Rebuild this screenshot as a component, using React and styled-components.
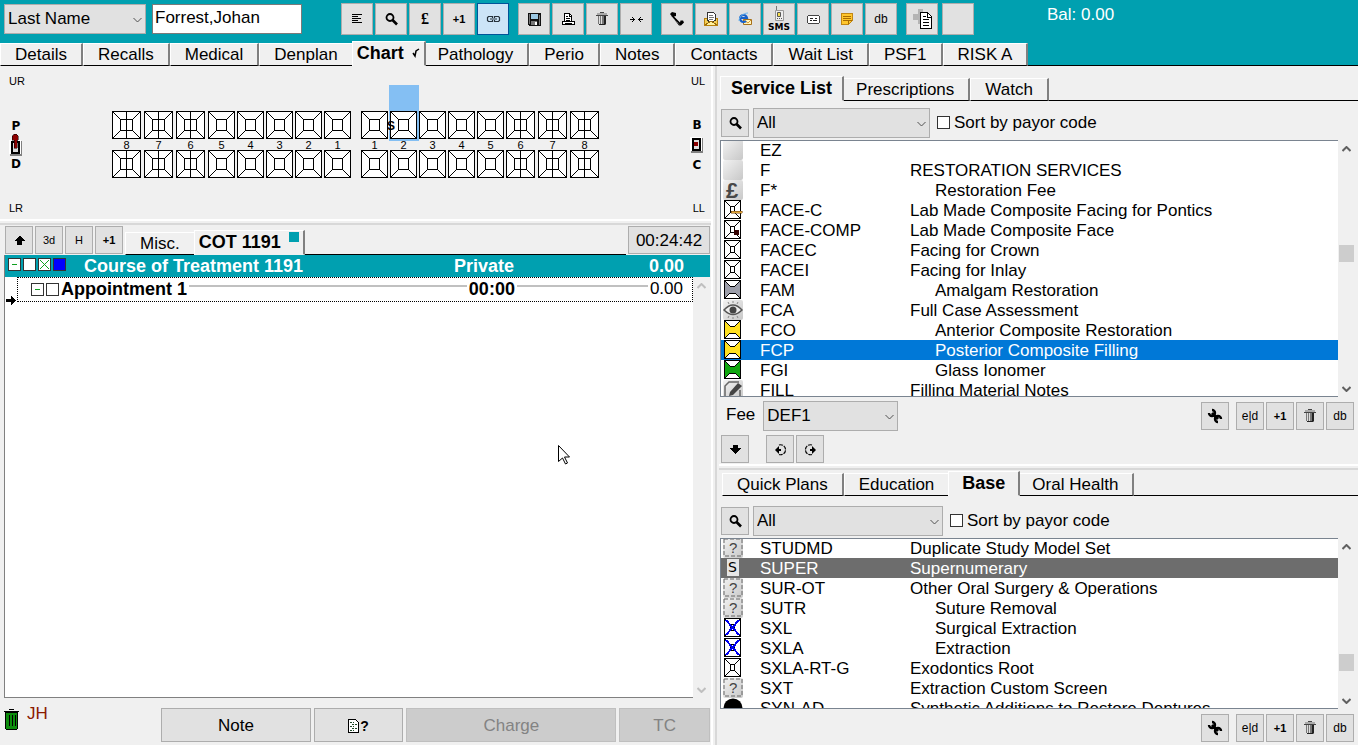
import { useState } from "react";
import styled, { createGlobalStyle, css } from "styled-components";

const GlobalStyle = createGlobalStyle`
  * {
    box-sizing: border-box;
  }

  body {
    margin: 0;
    background: #f0f0f0;
    color: #000;
    font-family: "Liberation Sans", Arial, sans-serif;
    font-size: 17px;
    line-height: 20px;
  }

  button,
  input,
  select {
    font: inherit;
    color: inherit;
  }
`;

const Page = styled.div`
  display: flex;
  flex-direction: column;
  height: 100vh;
  overflow: hidden;
`;

const Header = styled.header`
  background: #00a0b0;
`;

const Toolbar = styled.div`
  display: flex;
  height: 40px;
  padding: 3px 4px 0;
`;

const ToolGroup = styled.div`
  display: flex;
  gap: ${(props) => props.$gap || 2}px;
  margin-right: ${(props) => (props.$last ? 73 : 9)}px;
`;

const Balance = styled.div`
  padding-top: 2px;
  color: #fff;
`;

const Button = styled.button`
  display: flex;
  flex: none;
  align-items: center;
  justify-content: center;
  width: ${(props) => props.$size || 28}px;
  height: ${(props) => props.$size || 28}px;
  padding: 0;
  border: 1px solid #adadad;
  background: #e1e1e1;
  font-size: 12px;

  ${(props) =>
    props.$active &&
    css`
      border-color: #005499;
      background: #cce4f7;
    `}
`;

const Glyph = styled.span`
  font-family: ${(props) =>
    props.$serif ? '"Liberation Serif", serif' : '"Liberation Sans", sans-serif'};
  font-size: ${(props) => props.$size || 12}px;
  font-weight: ${(props) => (props.$bold ? "bold" : "normal")};
  line-height: 16px;
`;

const Svg = styled.svg`
  display: block;
  flex: none;
  shape-rendering: ${(props) => (props.$smooth ? "auto" : "crispEdges")};
`;

const SelectBox = styled.div`
  position: relative;
  flex: none;
  width: ${(props) => props.$width}px;
  height: 30px;

  select {
    width: 100%;
    height: 100%;
    padding: 0 20px 0 3px;
    border: 1px solid #adadad;
    border-radius: 0;
    background: #e1e1e1;
    appearance: none;
  }

  svg {
    position: absolute;
    right: 4px;
    top: 13px;
    pointer-events: none;
  }
`;

const SearchField = styled.div`
  padding-top: 1px;
`;

const PatientName = styled.input`
  width: 150px;
  height: 30px;
  margin: 1px 39px 0 6px;
  padding: 0 2px 2px;
  border: 1px solid #7a7a7a;
  background: #fff;
`;

const TabStrip = styled.div`
  display: flex;
  flex: ${(props) => (props.$grow ? 1 : "none")};
  align-items: flex-end;
  height: ${(props) => props.$height || 25}px;
  margin-top: ${(props) => props.$top || 0}px;
  padding-left: ${(props) => props.$inset || 0}px;
`;

const TabRest = styled.div`
  flex: 1;
  align-self: flex-end;
  border-bottom: 1px solid #000;
`;

const Tab = styled.button`
  display: flex;
  align-items: center;
  flex: none;
  gap: 8px;
  height: 23px;
  padding: 0 14px;
  border: 0;
  border-left: 1px solid #fff;
  border-top: 1px solid #fff;
  border-right: 2px solid #808080;
  border-bottom: 1px solid #000;
  background: #f0f0f0;
  white-space: nowrap;

  ${(props) =>
    props.$active &&
    css`
      z-index: 1;
      height: 25px;
      margin: 0 -3px 0 -2px;
      padding: 0 ${props.$pad}px 2px;
      border-bottom-color: #f0f0f0;
      font-size: 18px;
      font-weight: bold;
    `}

  &:first-child {
    margin-left: 0;
  }
`;

const Workspace = styled.main`
  display: grid;
  flex: 1;
  grid-template-columns: minmax(0, 711fr) 8px minmax(0, 639fr);
  min-height: 0;
`;

const Column = styled.section`
  display: flex;
  flex-direction: column;
  min-height: 0;
`;

const VSplit = styled.div`
  background: linear-gradient(to right, #fff 2px, #f0f0f0 2px 4px, #d8d8d8 4px 6px, #f0f0f0 6px);
`;

const HSplit = styled.div`
  flex: none;
  height: 7px;
  background: linear-gradient(to bottom, #fff 2px, #f0f0f0 2px 4px, #d8d8d8 4px 6px, #f0f0f0 6px);
`;

const Mouth = styled.div`
  display: grid;
  flex: none;
  grid-template-columns: 103px 1fr 20px;
  height: 153px;
  padding: 7px 6px 3px 9px;
`;

const Side = styled.div`
  display: flex;
  flex-direction: column;
  justify-content: space-between;
  align-items: ${(props) => (props.$right ? "flex-end" : "flex-start")};
  font-size: 11px;
  line-height: 16px;
`;

const Switcher = styled.div`
  display: flex;
  flex-direction: column;
  align-items: center;
  gap: ${(props) => props.$gap}px;
  margin-right: 1px;
  font-family: "DejaVu Sans", sans-serif;
  font-size: 12px;
  font-weight: bold;
  line-height: 14px;
`;

const Arches = styled.div`
  display: flex;
  gap: 10px;
  padding-top: 38px;
`;

const Quadrants = styled.div`
  display: flex;
  gap: 2px;
`;

const ToothColumn = styled.div`
  position: relative;
  display: flex;
  flex-direction: column;
  height: 67px;
  font-size: 11px;
  line-height: 13px;
  text-align: center;
  margin-left: ${(props) => (props.$shifted ? 1 : 0)}px;
  margin-right: ${(props) => (props.$spaced ? 1 : 0)}px;

  ${(props) =>
    props.$selected &&
    css`
      &::before {
        content: "";
        position: absolute;
        left: -1px;
        top: -26px;
        width: 30px;
        height: 56px;
        background: #84bff3;
      }
    `}

  svg {
    position: relative;
  }

  svg + svg {
    margin-top: 11px;
  }
`;

const ToothNumber = styled.span`
  position: relative;
  height: 11px;
`;

const ToothMark = styled.span`
  position: absolute;
  left: -3px;
  top: 9px;
  font-size: 12px;
  font-weight: bold;
`;

const CourseBar = styled.div`
  display: flex;
  flex: none;
  gap: 2px;
  height: 29px;
  padding: 0 1px 0 5px;
`;

const CourseTabs = styled.div`
  display: flex;
  flex: 1;
  align-items: flex-end;
  height: 29px;
`;

const Timer = styled.div`
  width: 82px;
  height: 28px;
  border: 1px solid #adadad;
  background: #e1e1e1;
  line-height: 27px;
  text-align: center;
`;

const Swatch = styled.span`
  align-self: flex-start;
  width: 10px;
  height: 10px;
  margin-top: 1px;
  background: #00a0b0;
`;

const Tree = styled.div`
  display: flex;
  flex: 1;
  flex-direction: column;
  min-height: 0;
  margin-left: 4px;
  border-left: 1px solid #808080;
`;

const CourseRow = styled.div`
  display: grid;
  flex: none;
  grid-template-columns: 79px 1fr 230px 26px;
  height: 22px;
  margin-right: 1px;
  background: #00a0b0;
  color: #fff;
  font-size: 18px;
  font-weight: bold;
  line-height: 22px;
`;

const Payment = styled.span`
  display: flex;
  justify-content: space-between;
`;

const Boxes = styled.span`
  display: flex;
  gap: 2px;
  padding: 3px 0 0 3px;
`;

const CheckBox = styled.input`
  flex: none;
  width: 13px;
  height: 13px;
  margin: 0;
  border: 1px solid #333;
  background: ${(props) => props.$fill || "#fff"};
  appearance: none;

  &:checked {
    background: #0078d7;
  }
`;

const TreeBody = styled.div`
  display: flex;
  flex: 1;
  min-height: 0;
  margin-right: 1px;
`;

const Items = styled.div`
  position: relative;
  flex: 1;
  border-bottom: 1px solid #808080;
  background: #fff;
`;

const Appointment = styled.div`
  display: flex;
  align-items: center;
  gap: 2px;
  height: 25px;
  margin-left: 12px;
  padding: 0 9px 1px 13px;
  border: 1px dotted #000;

  b {
    font-size: 18px;
  }
`;

const Rule = styled.span`
  flex: ${(props) => (props.$width ? `0 0 ${props.$width}px` : 1)};
  height: 2px;
  margin-bottom: 6px;
  background: #c0c0c0;
`;

const DropArrow = styled.span`
  position: absolute;
  left: 1px;
  top: 19px;
`;

const Pointer = styled.span`
  position: absolute;
  left: 553px;
  top: 168px;
`;

const Footer = styled.div`
  display: flex;
  flex: none;
  gap: 3px;
  height: 47px;
  padding: 10px 1px 3px 3px;
`;

const Owner = styled.div`
  display: flex;
  gap: 6px;
  width: 155px;
  color: #8b1a00;
  line-height: 12px;
`;

const ActionButton = styled.button`
  display: flex;
  flex: ${(props) => props.$grow} 1 0;
  align-items: center;
  justify-content: center;
  gap: 1px;
  padding: 1px 0 0;
  border: 1px solid #adadad;
  background: #e1e1e1;

  &:disabled {
    border-color: #bfbfbf;
    background: #ccc;
    color: #838383;
  }
`;

const Panel = styled.div`
  display: flex;
  flex: ${(props) => props.$grow} 1 0;
  flex-direction: column;
  min-height: 0;
`;

const PanelBody = styled.div`
  display: flex;
  flex: 1;
  flex-direction: column;
  min-height: 0;
  margin-left: 1px;
`;

const Filter = styled.div`
  display: flex;
  flex: none;
  align-items: center;
  gap: 4px;
  padding: ${(props) => props.$top}px 0 2px 1px;
`;

const SortLabel = styled.label`
  display: flex;
  gap: 4px;
  margin-left: 3px;

  input {
    margin-top: 3px;
  }
`;

const ListFrame = styled.div`
  display: flex;
  flex: 1;
  min-height: 0;
  padding-right: 3px;
`;

const ListBody = styled.div`
  flex: 1;
  overflow: hidden;
  border: 1px solid #7a8490;
  border-right: 0;
  background: #fff;
`;

const ServiceTable = styled.table`
  width: 100%;
  margin-top: -1px;
  border-collapse: collapse;
  line-height: 19px;
  table-layout: fixed;

  td {
    height: 20px;
    padding: 1px 0 0;
    white-space: nowrap;
  }

  td:nth-child(1) {
    width: 39px;
    padding: 0 0 0 2px;
  }

  td:nth-child(2) {
    width: 150px;
  }
`;

const ServiceRow = styled.tr`
  background: ${(props) => props.$highlight || "transparent"};
  color: ${(props) => (props.$highlight ? "#fff" : "#000")};

  td:nth-child(3) {
    padding-left: ${(props) => (props.$indent ? 25 : 0)}px;
  }
`;

const ScrollTrack = styled.div`
  display: flex;
  flex: none;
  flex-direction: column;
  align-items: center;
  width: 17px;
  padding: 6px 0 5px;
  background: #f0f0f0;
`;

const Space = styled.span`
  flex: ${(props) => props.$grow} 1 0;
`;

const Thumb = styled.span`
  width: 15px;
  height: 17px;
  background: #cdcdcd;
`;

const Controls = styled.div`
  display: flex;
  flex: none;
  gap: 2px;
  height: ${(props) => props.$height}px;
  padding: ${(props) => props.$top || 0}px 4px 0 1px;
`;

const FeeLabel = styled.label`
  display: flex;
  gap: 8px;
  margin: -1px auto 0 5px;
  line-height: 28px;
`;

const Gap = styled.span`
  width: ${(props) => props.$width}px;
`;

const Chevron = ({ up = false, bold = false, color = "#505050" }) => (
  <Svg $smooth width="9" height="6" viewBox="0 0 9 6">
    <path
      d={up ? "M.5 5L4.5 1L8.5 5" : "M.5 1L4.5 5L8.5 1"}
      fill="none"
      stroke={color}
      strokeWidth={bold ? 2 : 1}
    />
  </Svg>
);

const toolIcons = {
  lines: (
    <Svg width="12" height="12">
      <path d="M1 1.5h10M1 3.5h6M1 5.5h9M1 7.5h6M1 9.5h10" stroke="#000" />
    </Svg>
  ),
  search: (
    <Svg $smooth width="13" height="13">
      <circle cx="5" cy="4.5" r="3.5" fill="none" stroke="#000" strokeWidth="1.8" />
      <path d="M7.5 7l4.5 4.5" stroke="#000" strokeWidth="2.6" />
    </Svg>
  ),
  link: (
    <Svg $smooth width="15" height="9">
      <path
        d="M6.500 3V1.500h-4l-1 1v3l1 1h4V5M8.500 3V1.500h4l1 1v3l-1 1h-4V5M4 4h7"
        fill="none"
        stroke="#26323c"
        strokeWidth="1.200"
      />
    </Svg>
  ),
  save: (
    <Svg width="13" height="13">
      <path d="M0 0h13v13H1L0 12z" fill="#111" />
      <path d="M3 1h7v5H3z" fill="#9cc9e4" />
      <path d="M1 1h1v10H1zM11 2h1v10h-1zM3 8h6v4H3z" fill="#777" />
      <path d="M7 9h2v3H7z" fill="#fff" />
    </Svg>
  ),
  print: (
    <Svg width="13" height="13">
      <path d="M2.5 8V.5h5l2 2V8" fill="#fff" stroke="#000" />
      <path d="M7.5 1v2h2M4 3.5h2M4 5.5h4M4 7.500h4" fill="none" stroke="#000" />
      <path d="M.5 8.5h12v3H.5z" fill="#fff" stroke="#000" />
      <path d="M3 10.500h7" stroke="#000" />
    </Svg>
  ),
  bin: (
    <Svg width="12" height="14">
      <path d="M2 3h8v9l-1 1H3l-1-1z" fill="#777" />
      <path d="M3 4h1v8H3zM5 4h1v8H5z" fill="#ddd" />
      <path d="M8 4h2v8H8zM3 12h6v1H3z" fill="#222" />
      <path d="M1 1h10v2H1z" fill="#aaa" />
      <path d="M4 .5h4M0 3.5h12" stroke="#444" />
    </Svg>
  ),
  merge: (
    <Svg width="13" height="7">
      <path d="M0 3.5h5M8 3.5h5M3.5 2v3M2.5 1v1M2.5 5v1M9.5 2v3M10.5 1v1M10.5 5v1" stroke="#000" />
    </Svg>
  ),
  phone: (
    <Svg $smooth width="14" height="14">
      <path d="M0 2L2 0l4 1v3L4 4.500l6 6 .5-2H13l1 2-3 3H9z" fill="#000" />
      <path d="M1.500 4.500l9 9" stroke="#888" strokeDasharray="1 1" />
    </Svg>
  ),
  mail: (
    <Svg width="14" height="14">
      <path d="M.5 6.5h13v7H.5z" fill="#f4cf55" stroke="#b8810c" />
      <path d="M3.5 8V.5h6l2 2V8L7 11z" fill="#fff" stroke="#333" />
      <path d="M5 3.5h4M5 5.5h5M5 7.5h4" stroke="#777" />
      <path d="M1 13l6-4 6 4" fill="#fff2a0" stroke="#9b6c0b" />
    </Svg>
  ),
  web: (
    <Svg $smooth width="15" height="14">
      <path d="M5.500 7.500h8v5h-8z" fill="#fff5bd" stroke="#a77018" />
      <path d="M6 8l4 3 3-3" fill="none" stroke="#d39635" />
      <path d="M2 6h7a3.500 3.500 0 1 0-1 3" fill="none" stroke="#1761c9" strokeWidth="2.200" />
      <path d="M1 9C1 5 5 1 10 1" fill="none" stroke="#6bb8f0" />
    </Svg>
  ),
  sms: (
    <Svg $smooth width="24" height="26">
      <path d="M9.500 0v5" stroke="#777" />
      <path d="M8.500 4.500h8v10h-8z" fill="#eee" stroke="#999" />
      <path d="M10.500 6.500h3v4h-3z" fill="#f5dd4a" stroke="#555" />
      <path d="M10 12.500h1M12 12.500h1M14 12.500h1" stroke="#555" />
      <text x="1" y="24" fontSize="9" fontWeight="bold" fontFamily="DejaVu Sans">SMS</text>
    </Svg>
  ),
  card: (
    <Svg width="13" height="9">
      <path d="M1 .5h11M.5 1v7M12.500 1v7M1 8.500h11" stroke="#444" />
      <path d="M1 1h11v7H1z" fill="#fff" />
      <path d="M3 3.500h3M8 3.500h2M3 5.500h2M6 5.500h4" stroke="#222" />
    </Svg>
  ),
  note: (
    <Svg width="12" height="12">
      <path d="M.5.5h11v7l-4 4h-7z" fill="#ffc62c" stroke="#c18612" />
      <path d="M2 3.500h8M2 5.500h8M2 7.500h5M7.500 11V7.500H11" fill="none" stroke="#a96c00" />
    </Svg>
  ),
  addPage: (
    <Svg width="22" height="22">
      <path d="M7 1h5v5h5v6h-5v4H7v-4H2V6h5z" fill="#b4b4b4" />
      <path d="M9.500 4.500h7l4 4v12h-11z" fill="#fff" stroke="#000" />
      <path d="M16.500 5v4h4M12 8.500h3M12 11.500h6M12 14.500h6M12 17.500h6" fill="none" stroke="#000" />
    </Svg>
  ),
  wrench: (
    <Svg $smooth width="16" height="16">
      <path d="M5 5l6 6" stroke="#000" strokeWidth="3" />
      <path
        d="M5 2A3 3 0 1 1 2 5M11 14a3 3 0 1 1 3-3"
        transform="rotate(0 8 8)"
        fill="none"
        stroke="#000"
        strokeWidth="2.400"
      />
    </Svg>
  ),
  up: (
    <Svg width="11" height="9">
      <path d="M5 0h1l5 5H8v4H3V5H0z" />
    </Svg>
  ),
  down: (
    <Svg width="11" height="9">
      <path d="M3 0h5v3h3L6 9H5L0 3h3z" />
    </Svg>
  ),
  undo: (
    <Svg $smooth width="13" height="13">
      <path d="M5 2a5 5 0 1 1 0 9.500" fill="none" stroke="#000" strokeWidth="1.200" strokeDasharray="4 1" />
      <path d="M1 7l4-4v3h2v2H5v3z" />
    </Svg>
  ),
  redo: (
    <Svg $smooth width="13" height="13">
      <path d="M8 2a5 5 0 1 0 0 9.500" fill="none" stroke="#000" strokeWidth="1.200" strokeDasharray="4 1" />
      <path d="M12 7L8 3v3H6v2h2v3z" />
    </Svg>
  ),
};

const Tooth = ({ wide = false }) => {
  const w = wide ? 29 : 27;
  const right = wide ? 20.5 : 18.5;

  return (
    <Svg width={w} height="28">
      <path d={`M.5.5h${w - 1}v27H.5z`} fill="#fff" stroke="#000" />
      <path
        d={`M.5.5l8 8M${w - 0.5}.5L${right} 8.5M.5 27.5l8-8M${w - 0.5} 27.500L${right} 19.500M8.500 8.500H${right}V19.500H8.500z`}
        fill="none"
        stroke="#000"
      />
      {wide && <path d="M14.500 0v28" stroke="#000" />}
    </Svg>
  );
};

const BoxTooth = ({ fill, mark }) => (
  <Svg width="20" height="20">
    <path d="M1.500.5h16v18h-16z" fill="#fff" stroke="#000" />
    {fill ? (
      <>
        <path d="M2 1l5 5h5l5-5v17l-5-5H7l-5 5z" fill={fill} />
        <path d="M2 1l5 5h5l5-5M2 18l5-5h5l5 5" fill="none" stroke="#000" />
      </>
    ) : (
      <path d="M2 1l5 5M17 1l-5 5M2 18l5-5M17 18l-5-5M7.500 6.500h4v6h-4z" fill="none" stroke="#000" />
    )}
    {mark === "bridge" && (
      <path d="M8 11h11v2H8z" fill="#e0a63c" stroke="#70420e" strokeWidth=".5" />
    )}
    {mark === "face" && <path d="M11 10h5v5h-5z" fill="#300" />}
    {mark === "cross" && (
      <path d="M3 2l13 15M16 2L3 17" stroke="#0000f0" strokeWidth="2" />
    )}
  </Svg>
);

const Tile = ({ children }) => (
  <Svg $smooth width="20" height="20">
    <defs>
      <linearGradient id="tile" x1="0" y1="0" x2="1" y2="1">
        <stop offset="0" stopColor="#f2f2f2" />
        <stop offset="1" stopColor="#c8c8c8" />
      </linearGradient>
    </defs>
    <rect width="20" height="20" rx="2" fill="url(#tile)" />
    {children}
  </Svg>
);

const rowIcons = {
  blank: <Tile />,
  pound: (
    <Tile>
      <text x="3" y="18" fontSize="22" fontWeight="bold" fill="#484848">£</text>
    </Tile>
  ),
  eye: (
    <Tile>
      <path d="M1 10Q10 0 19 10Q10 19 1 10z" fill="#eee" stroke="#555" strokeWidth="1.500" />
      <circle cx="10" cy="10" r="3.500" fill="#444" />
      <path d="M10 1v2M5 2l1 2M15 2l-1 2M10 17v2M5 18l1-2M15 18l-1-2" stroke="#888" />
    </Tile>
  ),
  edit: (
    <Tile>
      <path d="M17 10v9H2V6l4-4h10" fill="none" stroke="#666" strokeWidth="1.500" />
      <path d="M6 16l1-4 8-9 4 3-9 9z" fill="#444" />
    </Tile>
  ),
  unknown: (
    <Tile>
      <rect x="1" y="1" width="18" height="17" fill="none" stroke="#666" strokeDasharray="4 2" />
      <text x="6" y="15" fontSize="15" fill="#444">?</text>
    </Tile>
  ),
  super: (
    <Svg $smooth width="20" height="20">
      <rect x="4" y="1" width="12" height="17" fill="#e6e6e6" />
      <text x="5" y="14" fontSize="14" fontFamily="DejaVu Sans">S</text>
    </Svg>
  ),
  dome: (
    <Svg $smooth width="20" height="20">
      <circle cx="10" cy="10" r="9.500" fill="#000" />
    </Svg>
  ),
  tooth: <BoxTooth />,
  bridge: <BoxTooth mark="bridge" />,
  face: <BoxTooth mark="face" />,
  cross: <BoxTooth mark="cross" />,
  amalgam: <BoxTooth fill="#9c9eaa" />,
  composite: <BoxTooth fill="#ffe020" />,
  glass: <BoxTooth fill="#10a810" />,
};

const mainTabs = [
  "Details", "Recalls", "Medical", "Denplan", "Chart", "Pathology",
  "Perio", "Notes", "Contacts", "Wait List", "PSF1", "RISK A",
];

// icon, code, description, indented
const services = [
  ["blank", "EZ", ""],
  ["blank", "F", "RESTORATION SERVICES"],
  ["pound", "F*", "Restoration Fee", true],
  ["bridge", "FACE-C", "Lab Made Composite Facing for Pontics"],
  ["face", "FACE-COMP", "Lab Made Composite Face"],
  ["tooth", "FACEC", "Facing for Crown"],
  ["tooth", "FACEI", "Facing for Inlay"],
  ["amalgam", "FAM", "Amalgam Restoration", true],
  ["eye", "FCA", "Full Case Assessment"],
  ["composite", "FCO", "Anterior Composite Restoration", true],
  ["composite", "FCP", "Posterior Composite Filling", true],
  ["glass", "FGI", "Glass Ionomer", true],
  ["edit", "FILL", "Filling Material Notes"],
];

const baseCharting = [
  ["unknown", "STUDMD", "Duplicate Study Model Set"],
  ["super", "SUPER", "Supernumerary"],
  ["unknown", "SUR-OT", "Other Oral Surgery & Operations"],
  ["unknown", "SUTR", "Suture Removal", true],
  ["cross", "SXL", "Surgical Extraction", true],
  ["cross", "SXLA", "Extraction", true],
  ["tooth", "SXLA-RT-G", "Exodontics Root"],
  ["unknown", "SXT", "Extraction Custom Screen"],
  ["dome", "SYN-AD", "Synthetic Additions to Restore Dentures"],
];

const ToolButton = ({ icon, label, size, active, children }) => (
  <Button type="button" $size={size} $active={active} aria-label={label || icon}>
    {icon ? toolIcons[icon] : children}
  </Button>
);

const Select = ({ width, value, id, label }) => (
  <SelectBox $width={width}>
    <select id={id} aria-label={label} defaultValue={value}>
      <option>{value}</option>
    </select>
    <Chevron />
  </SelectBox>
);

const Scrollbar = ({ before, after }) => {
  const idle = before === undefined;
  return (
    <ScrollTrack>
      <Chevron up bold color={idle ? "#bfbfbf" : "#606060"} />
      <Space $grow={before || 1} />
      {!idle && <Thumb />}
      <Space $grow={after || 1} />
      <Chevron bold color={idle ? "#bfbfbf" : "#606060"} />
    </ScrollTrack>
  );
};

const Tabs = ({ items, active, pad, ...rest }) => (
  <TabStrip role="tablist" {...rest}>
    {items.map((item) => (
      <Tab
        key={item}
        type="button"
        role="tab"
        $active={item === active}
        $pad={pad}
        aria-selected={item === active}
      >
        {item}
        {item === "Chart" && (
          <Svg $smooth width="8" height="10">
            <path d="M1 5l2 3 1-5 3-2" fill="none" stroke="#000" strokeWidth="1.500" />
          </Svg>
        )}
      </Tab>
    ))}
    <TabRest />
  </TabStrip>
);

const ServiceList = ({ rows, highlight, color, before, after }) => {
  const [selected, setSelected] = useState(highlight);

  return (
    <ListFrame>
      <ListBody>
        <ServiceTable>
          <tbody>
            {rows.map(([icon, code, name, indent]) => (
              <ServiceRow
                key={code}
                $indent={indent}
                $highlight={code === selected ? color : ""}
                onClick={() => setSelected(code)}
              >
                <td>{rowIcons[icon]}</td>
                <td>{code}</td>
                <td>{name}</td>
              </ServiceRow>
            ))}
          </tbody>
        </ServiceTable>
      </ListBody>
      <Scrollbar before={before} after={after} />
    </ListFrame>
  );
};

const FilterBar = ({ id, top, width }) => (
  <Filter $top={top}>
    <ToolButton icon="search" />
    <Select width={width} value="All" label="Category" />
    <SortLabel htmlFor={id}>
      <CheckBox id={id} type="checkbox" />
      Sort by payor code
    </SortLabel>
  </Filter>
);

const EditButtons = () => (
  <>
    <ToolButton icon="wrench" />
    <Gap $width={3} />
    <ToolButton label="Edit"><Glyph>e|d</Glyph></ToolButton>
    <ToolButton label="Add one"><Glyph $bold $size={11}>+1</Glyph></ToolButton>
    <ToolButton icon="bin" />
    <ToolButton label="Database"><Glyph>db</Glyph></ToolButton>
  </>
);

const Quadrant = ({ numbers, left = false }) => (
  <Quadrants>
    {numbers.map((n) => {
      const selected = !left && n === 2;
      return (
        <ToothColumn key={n} $selected={selected} $spaced={left && n > 5} $shifted={!left && n > 6}>
          <Tooth wide={n > 5} />
          <ToothNumber>{n}</ToothNumber>
          <Tooth wide={n > 5} />
          {selected && <ToothMark>S</ToothMark>}
        </ToothColumn>
      );
    })}
  </Quadrants>
);

const ViewIcon = ({ raised = false }) => (
  <Svg width="14" height={raised ? 22 : 16} viewBox={raised ? "0 -6 14 22" : "0 0 14 16"}>
    <path d="M1 1h12v15H1z" fill="#808080" />
    <path d="M0 0h12v14H0z" fill="#fff" />
    <path d="M2.500 1.500h7v11h-7z" fill="#ddd" stroke="#000" strokeWidth="2" />
    {raised ? (
      <path d="M5 8V0H3V-4L5-6H7L9-4V0H8V8z" fill="#8b0000" stroke="#000" strokeWidth=".5" />
    ) : (
      <path d="M4 5h4v4H4z" fill="#8b0000" />
    )}
  </Svg>
);

const ToothChart = () => (
  <Mouth>
    <Side>
      <span>UR</span>
      <Switcher $gap={1}>P<ViewIcon raised />D</Switcher>
      <span>LR</span>
    </Side>
    <Arches>
      <Quadrant left numbers={[8, 7, 6, 5, 4, 3, 2, 1]} />
      <Quadrant numbers={[1, 2, 3, 4, 5, 6, 7, 8]} />
    </Arches>
    <Side $right>
      <span>UL</span>
      <Switcher $gap={5}>B<ViewIcon />C</Switcher>
      <span>LL</span>
    </Side>
  </Mouth>
);

const Expander = ({ cross = false }) => (
  <Svg width="13" height="13">
    <path d="M.5.5h12v12H.5z" fill="#fff" stroke="#333" />
    <path d={cross ? "M2 2l9 9M11 2l-9 9" : "M4 6.500h5"} stroke="#10a020" />
  </Svg>
);

const Treatment = () => (
  <>
    <CourseBar>
      <ToolButton icon="up" />
      <ToolButton label="3d"><Glyph $size={11}>3d</Glyph></ToolButton>
      <ToolButton label="History"><Glyph $size={11}>H</Glyph></ToolButton>
      <ToolButton label="Add one"><Glyph $bold $size={11}>+1</Glyph></ToolButton>
      <CourseTabs>
        <TabStrip $grow role="tablist">
          <Tab type="button" role="tab">Misc.</Tab>
          <Tab type="button" role="tab" $active $pad={4} aria-selected="true">
            COT 1191
            <Swatch />
          </Tab>
          <TabRest />
        </TabStrip>
      </CourseTabs>
      <Timer>00:24:42</Timer>
    </CourseBar>
    <Tree>
      <CourseRow>
        <Boxes>
          <Expander />
          <CheckBox type="checkbox" aria-label="Complete" />
          <Expander cross />
          <CheckBox type="checkbox" aria-label="Colour" $fill="#0000ff" />
        </Boxes>
        <span>Course of Treatment 1191</span>
        <Payment>
          <span>Private</span>
          <span>0.00</span>
        </Payment>
      </CourseRow>
      <TreeBody>
        <Items>
          <Appointment>
            <Expander />
            <CheckBox type="checkbox" aria-label="Appointment 1" />
            <b>Appointment 1</b>
            <Rule />
            <b>00:00</b>
            <Rule $width={131} />
            0.00
          </Appointment>
          <DropArrow>
            <Svg width="10" height="9">
              <path d="M0 3h5V0l5 4-5 5V6H0z" />
            </Svg>
          </DropArrow>
          <Pointer>
            <Svg $smooth width="13" height="20">
              <path d="M.5.5v16l4-3.500 3 6 2-1-3-6h5z" fill="#fff" stroke="#000" />
            </Svg>
          </Pointer>
        </Items>
        <Scrollbar />
      </TreeBody>
    </Tree>
    <Footer>
      <Owner>
        <Svg width="18" height="22">
          <path d="M2 4h13l-1 17H3z" fill="#0c8c0c" stroke="#000" />
          <path d="M1 3.500h15M6 1.500h5M6.500 7v11M9.500 7v11M12.500 7v11" stroke="#000" />
        </Svg>
        JH
      </Owner>
      <ActionButton $grow={150}>Note</ActionButton>
      <ActionButton $grow={89} aria-label="Note help">
        <Svg width="11" height="14">
          <path d="M.5.5h7l3 3v10H.5z" fill="#fff" stroke="#000" />
          <path
            d="M2 3.500h4M4 5.500h5M2 7.500h4M4 9.500h5M2 11.500h4"
            stroke="#204828"
            strokeDasharray="2 1"
          />
        </Svg>
        <Glyph $bold $size={14}>?</Glyph>
      </ActionButton>
      <ActionButton $grow={211} disabled>Charge</ActionButton>
      <ActionButton $grow={90} disabled>TC</ActionButton>
    </Footer>
  </>
);

const App = () => (
  <Page>
    <GlobalStyle />
    <Header>
      <Toolbar>
        <SearchField>
          <Select width={142} value="Last Name" label="Search by" />
        </SearchField>
        <PatientName aria-label="Patient" defaultValue="Forrest,Johan" />
        <ToolGroup>
          <ToolButton size={32} icon="lines" />
          <ToolButton size={32} icon="search" />
          <ToolButton size={32} label="Payments"><Glyph $serif $bold $size={16}>£</Glyph></ToolButton>
          <ToolButton size={32} label="Add one"><Glyph $bold $size={11}>+1</Glyph></ToolButton>
          <ToolButton size={32} icon="link" active />
        </ToolGroup>
        <ToolGroup>
          {["save", "print", "bin", "merge"].map((icon) => (
            <ToolButton key={icon} size={32} icon={icon} />
          ))}
        </ToolGroup>
        <ToolGroup>
          {["phone", "mail", "web", "sms", "card", "note"].map((icon) => (
            <ToolButton key={icon} size={32} icon={icon} />
          ))}
          <ToolButton size={32} label="Database"><Glyph>db</Glyph></ToolButton>
        </ToolGroup>
        <ToolGroup $gap={4} $last>
          <ToolButton size={32} icon="addPage" />
          <ToolButton size={32} label="Custom" />
        </ToolGroup>
        <Balance>Bal: 0.00</Balance>
      </Toolbar>
      <Tabs items={mainTabs} active="Chart" pad={4} $height={26} />
    </Header>
    <Workspace>
      <Column>
        <ToothChart />
        <HSplit />
        <Treatment />
      </Column>
      <VSplit />
      <Column>
        <Panel $grow={398}>
          <PanelBody>
            <Tabs
              items={["Service List", "Prescriptions", "Watch"]}
              active="Service List"
              pad={10}
              $top={10}
            />
            <FilterBar id="sort-services" top={7} width={177} />
            <ServiceList rows={services} highlight="FCP" color="#0078d7" before={89} after={118} />
            <Controls $height={38} $top={5}>
              <FeeLabel htmlFor="fee">
                Fee
                <Select id="fee" width={135} value="DEF1" />
              </FeeLabel>
              <EditButtons />
            </Controls>
            <Controls $height={29}>
              <ToolButton icon="down" />
              <Gap $width={13} />
              <ToolButton icon="undo" />
              <ToolButton icon="redo" />
            </Controls>
          </PanelBody>
        </Panel>
        <HSplit />
        <Panel $grow={274}>
          <PanelBody>
            <Tabs
              items={["Quick Plans", "Education", "Base", "Oral Health"]}
              active="Base"
              pad={13}
              $inset={2}
            />
            <FilterBar id="sort-base" top={10} width={190} />
            <ServiceList rows={baseCharting} highlight="SUPER" color="#6d6d6d" before={96} after={25} />
            <Controls $height={36} $top={5}>
              <Space $grow={1} />
              <EditButtons />
            </Controls>
          </PanelBody>
        </Panel>
      </Column>
    </Workspace>
  </Page>
);

export default App;
